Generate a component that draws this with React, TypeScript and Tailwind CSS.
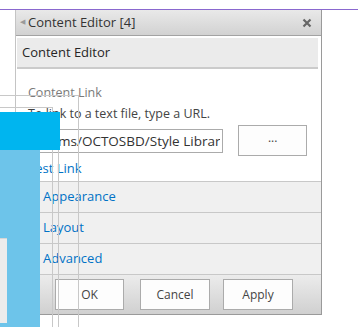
import React from 'react';

// panel rows below the content link section
const sections = ['Appearance', 'Layout', 'Advanced'];

const font = { fontFamily: '"Segoe UI", "Open Sans", "Noto Sans", sans-serif' };

const FooterButton = ({ label, className }: { label: string; className: string }) => (
  <button
    className={`h-[31px] border border-[#ababab] bg-[#fdfdfd] text-[12px] text-[#444] ${className}`}
  >
    {label}
  </button>
);

export default function App() {
  return (
    <div className="relative h-[327px] w-[358px] overflow-hidden bg-white" style={font}>
      <div className="h-[9px]" />
      <div className="h-px w-full bg-[#8a68cf]" />

      {/* tool pane */}
      <div className="ml-[15px] flex h-[305px] w-[307px] flex-col border-b border-l border-r border-b-[#9a9a9a] border-l-[#c4c4c4] border-r-[#9a9a9a]">
        <div className="flex h-[26px] items-center border-b border-[#a3a3a3] bg-gradient-to-b from-[#e9e9e9] to-[#d2d2d2] pl-[4px] pr-[9px]">
          <span className="text-[7px] text-[#9a9a9a]">◀</span>
          <span className="ml-[3px] text-[13px] text-[#333]">Content Editor [4]</span>
          <svg className="ml-auto" width="10" height="10" viewBox="0 0 10 10">
            <path d="M1.5 1.5 L8.5 8.5 M8.5 1.5 L1.5 8.5" stroke="#666" strokeWidth="2.2" />
          </svg>
        </div>

        <div className="ml-[1px] mr-[3px] mt-[2px] flex h-[31px] items-center border-b-2 border-[#cbcbcb] bg-[#ebebeb] pl-[5px] text-[13px] text-[#262626]">
          Content Editor
        </div>

        <div className="flex flex-col border-b border-[#c8c8c8] pl-[12px] pr-[14px]">
          <div className="mt-[16px] text-[12.5px] leading-[16px] text-[#7a7a7a]">Content Link</div>
          <div className="mt-[5px] text-[12.5px] leading-[16px] text-[#444]">
            To link to a text file, type a URL.
          </div>
          <div className="mt-[3px] flex items-center">
            <input
              readOnly
              value="/sites/cms/OCTOSBD/Style Library/js/content.html"
              className="h-[24px] w-[196px] border border-[#ababab] bg-white pl-[4px] pr-[2px] indent-[-20px] text-[13.5px] text-[#333] outline-none"
              style={font}
            />
            <button className="ml-[15px] h-[31px] w-[69px] border border-[#ababab] bg-[#fdfdfd] pb-[6px] text-[12px] text-[#444]">
              ...
            </button>
          </div>
          <div className="mt-[2px] h-[23px] text-[13px] leading-[20px] text-[#0072c6]">Test Link</div>
        </div>

        {sections.map((s) => (
          <div
            key={s}
            className="flex h-[31px] items-center border-b border-[#c8c8c8] bg-[#f0f0f0] pl-[27px] text-[13px] text-[#0072c6]"
          >
            {s}
          </div>
        ))}

        <div className="flex flex-1 items-start bg-gradient-to-b from-[#ececec] to-[#d0d0d0] pt-[4px]">
          <FooterButton label="OK" className="ml-[39px] w-[69px]" />
          <FooterButton label="Cancel" className="ml-[16px] w-[70px]" />
          <FooterButton label="Apply" className="ml-[13px] w-[70px]" />
        </div>
      </div>

      {/* page content showing over the pane */}
      <div className="absolute left-0 top-[95px] h-px w-[79px] bg-[#c8c8c8]" />
      <div className="absolute left-[78px] top-[95px] h-[232px] w-px bg-[#c8c8c8]" />
      <div className="absolute left-0 top-[107px] h-px w-[53px] bg-[#c8c8c8]" />
      <div className="absolute left-[52px] top-[107px] h-[220px] w-px bg-[#c8c8c8]" />
      <div className="absolute left-[58px] top-[150px] h-[177px] w-px bg-[#c8c8c8]" />
      <div className="absolute left-0 top-[112px] h-[38px] w-[60px] bg-[#00b5ef]" />
      <div className="absolute left-0 top-[150px] h-[177px] w-[40px] bg-[#6dc4ea]" />
      <div className="absolute left-0 top-[238px] h-[85px] w-[7px] border-t border-[#d6d6d6] bg-[#ececec]" />
    </div>
  );
}
